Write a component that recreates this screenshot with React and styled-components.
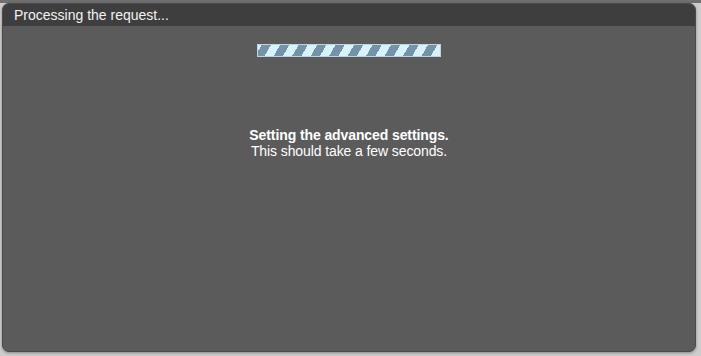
import styled, { createGlobalStyle } from "styled-components"

const GlobalStyle = createGlobalStyle`
  html, body {
    margin: 0;
    padding: 0;
    background: linear-gradient(#707070 0 3px, #cdcdcd 3px);
    font-family: "Liberation Sans", Arial, sans-serif;
  }
`

const Page = styled.div`
  width: 701px;
  height: 356px;
  padding: 3px 5px 6px 2px;
  box-sizing: border-box;
`

const Dialog = styled.div`
  height: 100%;
  display: flex;
  flex-direction: column;
  background: #5b5b5b;
  border: 1px solid #4a4a4a;
  border-radius: 7px;
  overflow: hidden;
  box-shadow: 0 1px 3px rgba(0, 0, 0, 0.35);
`

const Header = styled.div`
  height: 22px;
  flex-shrink: 0;
  display: flex;
  align-items: center;
  padding-left: 11px;
  background: #3e3e3e;
  color: #f2f2f2;
  font-size: 14px;
`

const Body = styled.div`
  display: flex;
  flex-direction: column;
  align-items: center;
  padding-top: 18px;
  color: #ffffff;
`

const Progress = styled.div`
  width: 182px;
  height: 11px;
  margin-left: -1px;
  border: 1px solid #bcd4e2;
  background: repeating-linear-gradient(
    -60deg,
    #d9f1f8 0 8px,
    #7492a8 8px 16px
  );
`

const Message = styled.div`
  margin-top: 70px;
  text-align: center;
  font-size: 14px;
  line-height: 16px;
  letter-spacing: -0.1px;
`

const Title = styled.div`
  font-weight: bold;
`

export default function App() {
  return (
    <>
      <GlobalStyle />
      <Page>
        <Dialog>
          <Header>Processing the request...</Header>
          <Body>
            <Progress />
            <Message>
              <Title>Setting the advanced settings.</Title>
              <div>This should take a few seconds.</div>
            </Message>
          </Body>
        </Dialog>
      </Page>
    </>
  )
}
